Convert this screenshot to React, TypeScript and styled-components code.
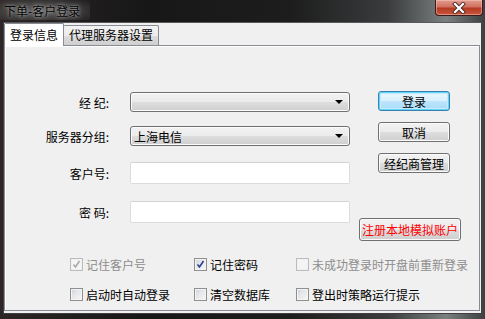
import React from 'react';
import styled, { createGlobalStyle, css } from 'styled-components';

const font = `"Noto Sans CJK SC", "Liberation Sans", sans-serif`;

const GlobalStyle = createGlobalStyle`
  html, body {
    margin: 0;
    padding: 0;
    background: #101010;
  }
  body {
    font-family: ${font};
    font-size: 12px;
  }
`;

const Window = styled.div`
  width: 485px;
  height: 319px;
  display: flex;
  flex-direction: column;
  background: linear-gradient(90deg, #2c2626 0%, #171717 30%, #1d1d1d 60%, #3a3c3d 80%, #7a7f80 92%, #3d3f40 100%);
  overflow: hidden;
`;

const TitleBar = styled.div`
  height: 22px;
  display: flex;
  justify-content: space-between;
  align-items: flex-start;
  flex-shrink: 0;
`;

const Title = styled.div`
  padding: 3px 10px 2px 4px;
  line-height: 15px;
  color: #050505;
  background: radial-gradient(ellipse at 45% 55%, rgba(120, 120, 120, 0.75) 0%, rgba(90, 90, 90, 0.45) 55%, rgba(40, 40, 40, 0) 100%);
  text-shadow: 0 0 3px rgba(190, 190, 190, 0.9), 0 0 6px rgba(160, 160, 160, 0.7);
`;

const CloseButton = styled.div`
  width: 46px;
  height: 15px;
  margin-right: 2px;
  border: 1px solid #3a1a1a;
  border-top: none;
  border-radius: 0 0 4px 4px;
  background: linear-gradient(180deg, #e29c8e 0%, #d2715f 45%, #b53a22 55%, #c8563d 100%);
  box-shadow: inset 0 0 0 1px rgba(255, 210, 200, 0.45);
  display: flex;
  align-items: center;
  justify-content: center;
`;

const Frame = styled.div`
  flex: 1;
  display: flex;
  padding: 0 3px 5px 3px;
`;

const Client = styled.div`
  flex: 1;
  background: #f0f0f0;
  border: 1px solid #3e3e3e;
  border-top-color: #595959;
  padding: 1px 1px 2px 0;
  display: flex;
  flex-direction: column;
`;

const TabStrip = styled.div`
  display: flex;
  align-items: flex-end;
  height: 22px;
  position: relative;
  z-index: 1;
  margin-bottom: -1px;
`;

const Tab = styled.div<{ $active?: boolean }>`
  border: 1px solid #898c95;
  border-bottom: none;
  border-radius: 2px 2px 0 0;
  padding: 0 5px;
  line-height: ${p => (p.$active ? '21px' : '18px')};
  color: #000;
  ${p =>
    p.$active
      ? css`
          background: #ffffff;
          height: 22px;
        `
      : css`
          background: linear-gradient(180deg, #f3f3f3 0%, #ebebeb 50%, #dddddd 51%, #cfcfcf 100%);
          height: 19px;
          margin-left: -1px;
          margin-bottom: 1px;
        `}
`;

const Panel = styled.div`
  flex: 1;
  border: 1px solid #898c95;
  background: #f0f0f0;
  box-shadow: inset 1px 1px 0 #ffffff;
  display: flex;
  flex-direction: column;
`;

const Top = styled.div`
  display: flex;
  align-items: flex-start;
`;

const Fields = styled.div`
  display: flex;
  flex-direction: column;
`;

const FieldRow = styled.div<{ $top: number; $h: number }>`
  display: flex;
  align-items: center;
  height: ${p => p.$h}px;
  margin-top: ${p => p.$top}px;
`;

const Label = styled.div`
  width: 104px;
  text-align: right;
  color: #000;
  white-space: pre;
`;

const Combo = styled.div`
  width: 220px;
  height: 20px;
  margin-left: 21px;
  box-sizing: border-box;
  border: 1px solid #707070;
  border-radius: 3px;
  background: linear-gradient(180deg, #f2f2f2 0%, #ebebeb 50%, #dddddd 51%, #cfcfcf 100%);
  box-shadow: inset 0 0 0 1px #fcfcfc;
  display: flex;
  align-items: center;
  justify-content: space-between;
  padding: 0 6px 0 3px;
  color: #000;
`;

const Arrow = styled.span`
  width: 0;
  height: 0;
  border-left: 4px solid transparent;
  border-right: 4px solid transparent;
  border-top: 4px solid #000;
`;

const TextBox = styled.div`
  width: 220px;
  height: 22px;
  margin-left: 21px;
  box-sizing: border-box;
  border: 1px solid #dcdcdc;
  border-top-color: #d2d2d2;
  border-radius: 2px;
  background: #ffffff;
`;

const Buttons = styled.div`
  display: flex;
  flex-direction: column;
  align-items: flex-start;
  margin-left: 9px;
  width: 102px;
`;

const Button = styled.div<{ $top: number; $default?: boolean; $wide?: boolean; $red?: boolean }>`
  box-sizing: border-box;
  width: ${p => (p.$wide ? 102 : 72)}px;
  height: ${p => (p.$wide ? 23 : 20)}px;
  margin-top: ${p => p.$top}px;
  margin-left: ${p => (p.$wide ? 0 : 19)}px;
  border: 1px solid #707070;
  border-radius: 3px;
  background: linear-gradient(180deg, #f2f2f2 0%, #ebebeb 50%, #dddddd 51%, #cfcfcf 100%);
  box-shadow: inset 0 0 0 1px #fbfbfb;
  display: flex;
  align-items: center;
  justify-content: center;
  color: ${p => (p.$red ? '#ff0000' : '#000')};
  ${p =>
    p.$default &&
    css`
      border-color: #3c7fb1;
      background: linear-gradient(180deg, #eaf6fd 0%, #d9f0fc 50%, #bee6fd 51%, #a7d9f5 100%);
      box-shadow: inset 0 0 0 1px #5ed4f8, inset 0 0 0 2px #c4eafd;
    `}
`;

const Checks = styled.div`
  display: grid;
  grid-template-columns: 124px 102px 1fr;
  grid-auto-rows: 16px;
  row-gap: 14px;
  margin: 15px 0 0 65px;
`;

const CheckItem = styled.div<{ $disabled?: boolean }>`
  display: flex;
  align-items: center;
  gap: 3px;
  color: ${p => (p.$disabled ? '#8d8d8d' : '#000')};
  white-space: nowrap;
`;

const Box = styled.span<{ $disabled?: boolean }>`
  box-sizing: border-box;
  width: 13px;
  height: 13px;
  flex-shrink: 0;
  border: 1px solid ${p => (p.$disabled ? '#bcbcbc' : '#8e8f8f')};
  background: ${p =>
    p.$disabled
      ? '#f4f4f4'
      : 'linear-gradient(135deg, #cbcfd5 0%, #e4e6e9 40%, #f6f6f6 100%)'};
  box-shadow: inset 0 0 0 1px ${p => (p.$disabled ? '#f0f0f0' : '#f4f4f4')};
  display: flex;
  align-items: center;
  justify-content: center;
`;

type CheckProps = { label: string; checked?: boolean; disabled?: boolean };

const Check: React.FC<CheckProps> = ({ label, checked, disabled }) => (
  <CheckItem $disabled={disabled}>
    <Box $disabled={disabled}>
      {checked && (
        <svg width="9" height="9" viewBox="0 0 9 9">
          <path d="M1.5 4.5 L3.5 7 L7.5 1" fill="none" stroke={disabled ? '#a8a8a8' : '#2a3f8f'} strokeWidth="1.6" />
        </svg>
      )}
    </Box>
    {label}
  </CheckItem>
);

const App: React.FC = () => (
  <>
    <GlobalStyle />
    <Window>
      <TitleBar>
        <Title>下单-客户登录</Title>
        <CloseButton>
          <svg width="14" height="12" viewBox="0 0 14 12">
            <path d="M3 2 L11 10 M11 2 L3 10" stroke="#4a2a2a" strokeWidth="4" strokeLinecap="square" />
            <path d="M3 2 L11 10 M11 2 L3 10" stroke="#ffffff" strokeWidth="2.2" strokeLinecap="square" />
          </svg>
        </CloseButton>
      </TitleBar>
      <Frame>
        <Client>
          <TabStrip>
            <Tab $active>登录信息</Tab>
            <Tab>代理服务器设置</Tab>
          </TabStrip>
          <Panel>
            <Top>
              <Fields>
                <FieldRow $top={46} $h={20}>
                  <Label>{'经 纪:'}</Label>
                  <Combo>
                    <span />
                    <Arrow />
                  </Combo>
                </FieldRow>
                <FieldRow $top={14} $h={20}>
                  <Label>服务器分组:</Label>
                  <Combo>
                    <span>上海电信</span>
                    <Arrow />
                  </Combo>
                </FieldRow>
                <FieldRow $top={16} $h={22}>
                  <Label>客户号:</Label>
                  <TextBox />
                </FieldRow>
                <FieldRow $top={17} $h={22}>
                  <Label>{'密 码:'}</Label>
                  <TextBox />
                </FieldRow>
              </Fields>
              <Buttons>
                <Button $top={45} $default>登录</Button>
                <Button $top={11}>取消</Button>
                <Button $top={11}>经纪商管理</Button>
                <Button $top={45} $wide $red>注册本地模拟账户</Button>
              </Buttons>
            </Top>
            <Checks>
              <Check label="记住客户号" checked disabled />
              <Check label="记住密码" checked />
              <Check label="未成功登录时开盘前重新登录" disabled />
              <Check label="启动时自动登录" />
              <Check label="清空数据库" />
              <Check label="登出时策略运行提示" />
            </Checks>
          </Panel>
        </Client>
      </Frame>
    </Window>
  </>
);

export default App;
